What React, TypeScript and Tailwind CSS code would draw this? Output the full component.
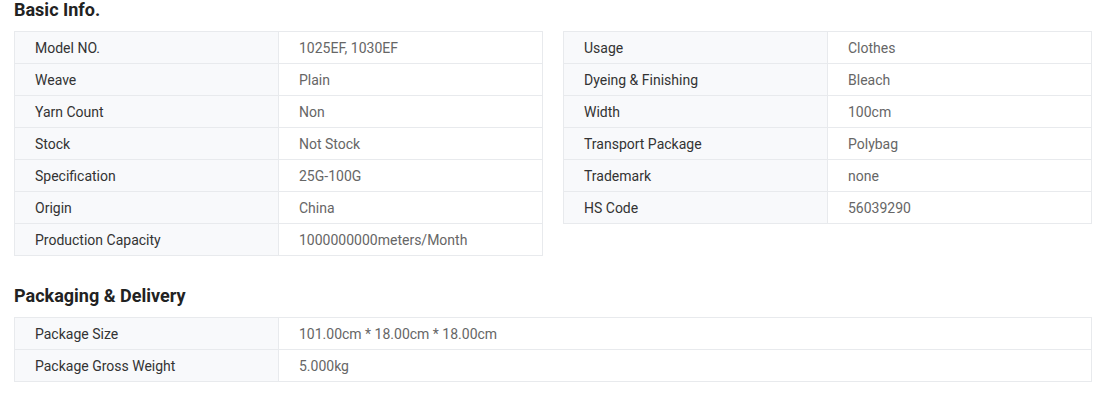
const basicLeft: [string, string][] = [
  ["Model NO.", "1025EF, 1030EF"],
  ["Weave", "Plain"],
  ["Yarn Count", "Non"],
  ["Stock", "Not Stock"],
  ["Specification", "25G-100G"],
  ["Origin", "China"],
  ["Production Capacity", "1000000000meters/Month"],
];

const basicRight: [string, string][] = [
  ["Usage", "Clothes"],
  ["Dyeing & Finishing", "Bleach"],
  ["Width", "100cm"],
  ["Transport Package", "Polybag"],
  ["Trademark", "none"],
  ["HS Code", "56039290"],
];

const packaging: [string, string][] = [
  ["Package Size", "101.00cm * 18.00cm * 18.00cm"],
  ["Package Gross Weight", "5.000kg"],
];

function InfoTable({ rows, className = "" }: { rows: [string, string][]; className?: string }) {
  return (
    <div className={`border-t border-l border-[#e8eaed] ${className}`}>
      {rows.map(([label, value]) => (
        <div key={label} className="flex h-8 text-[14px]">
          <div className="w-[264px] shrink-0 flex items-center pl-5 pt-px bg-[#f8f9fb] border-r border-b border-[#e8eaed] text-[#333]">
            {label}
          </div>
          <div className="flex-1 flex items-center pl-5 pt-px border-r border-b border-[#e8eaed] text-[#666]">
            {value}
          </div>
        </div>
      ))}
    </div>
  );
}

export default function App() {
  return (
    <div className="w-[1101px] h-[393px] bg-white pl-[14px] pr-[9px] font-['Roboto',sans-serif]">
      <h2 className="text-[18px] leading-5 font-bold text-[#222] mb-[11px]">Basic Info.</h2>
      <div className="flex items-start gap-5">
        <InfoTable rows={basicLeft} className="w-[529px]" />
        <InfoTable rows={basicRight} className="w-[529px]" />
      </div>
      <h2 className="text-[18px] leading-5 font-bold text-[#222] mt-[30px] mb-[11px]">Packaging &amp; Delivery</h2>
      <InfoTable rows={packaging} />
    </div>
  );
}
